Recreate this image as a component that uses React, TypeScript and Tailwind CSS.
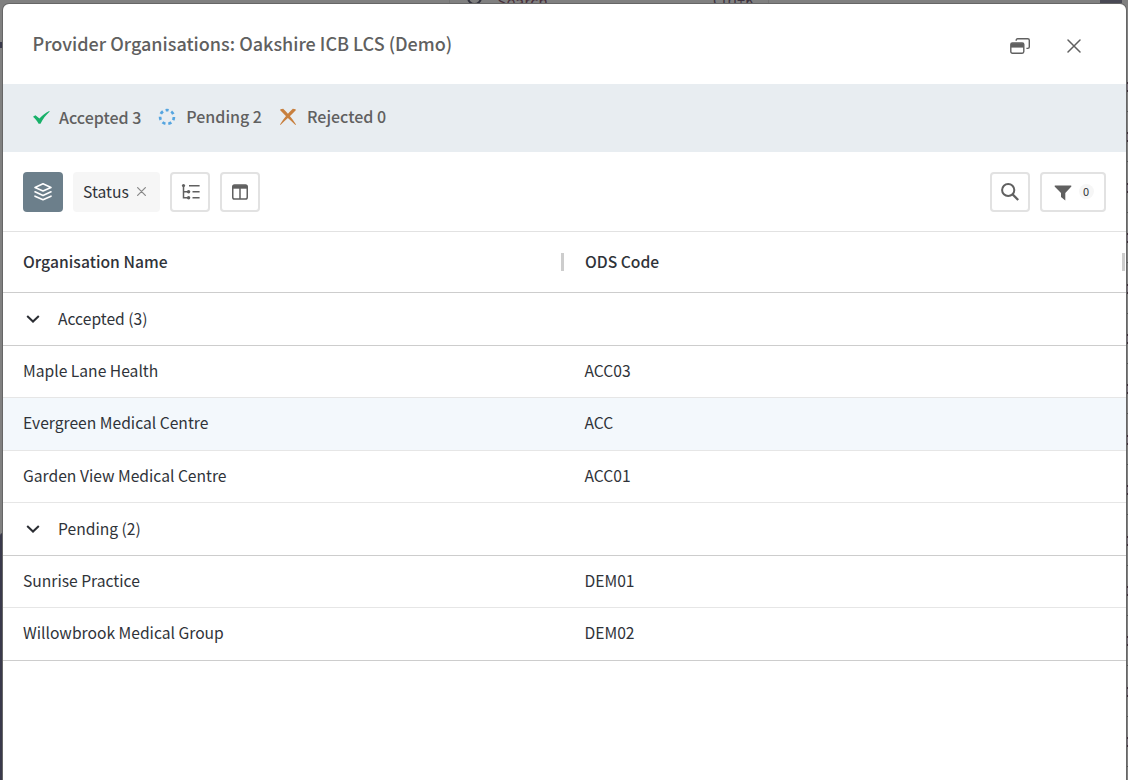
import clsx from "clsx";
import type { ReactNode } from "react";

interface Organisation {
  name: string;
  code: string;
  className: string;
}

interface Group {
  label: string;
  rows: Organisation[];
}

const groups: Group[] = [
  {
    label: "Accepted (3)",
    rows: [
      { name: "Maple Lane Health", code: "ACC03", className: "h-[52px] pb-0.5 border-[#e6e6e6]" },
      { name: "Evergreen Medical Centre", code: "ACC", className: "h-[53px] pb-0.5 border-[#e6e6e6] bg-[#f3f8fc]" },
      { name: "Garden View Medical Centre", code: "ACC01", className: "h-[52px] pb-0.5 border-[#e6e6e6]" },
    ],
  },
  {
    label: "Pending (2)",
    rows: [
      { name: "Sunrise Practice", code: "DEM01", className: "h-[52px] pb-0.5 border-[#e6e6e6]" },
      { name: "Willowbrook Medical Group", code: "DEM02", className: "h-[53px] pb-0.5 border-[#cdcdcd]" },
    ],
  },
];

function CheckIcon() {
  return (
    <svg width="17" height="13" viewBox="0 0 17 13" fill="#17b169">
      <path d="M0 5.8 2.4 4.2 6.4 7.4C9.4 4.4 12.6 1.6 16.2 0L16.7 .6C13 4 9.9 8 7.5 12.7H5.6C4.2 10 2.2 7.8 0 5.8Z" />
    </svg>
  );
}

function PendingIcon() {
  return (
    <svg width="18" height="18" viewBox="0 0 18 18" fill="none">
      <circle cx="9" cy="9" r="6.9" stroke="#55a5e0" strokeWidth="2.7" strokeDasharray="3.3 2.89" strokeDashoffset="1.65" transform="rotate(-90 9 9)" />
    </svg>
  );
}

function RejectIcon() {
  return (
    <svg width="18" height="18" viewBox="0 0 18 18" fill="#c8803f">
      <path d="M1.4 1.2 4.2 .8C7.8 4.4 13 10 17 16.4L16.4 17C11.2 11.8 6 7.4 1.2 2.2Z" />
      <path d="M16.6 1.2 13.8 .8C10 4.4 5 10 1 16.4L1.5 17C6.5 11.8 12 7.4 16.8 2.2Z" />
    </svg>
  );
}

function LayersIcon() {
  return (
    <svg width="20" height="20" viewBox="0 0 20 20" fill="none" stroke="#fff" strokeWidth="1.6" strokeLinejoin="round" strokeLinecap="round">
      <path d="M10 1.8 18 5.4 10 9 2 5.4Z" />
      <path d="M2 9.8 10 13.4 18 9.8" />
      <path d="M2 14.2 10 17.8 18 14.2" />
    </svg>
  );
}

function TreeIcon() {
  return (
    <svg width="20" height="18" viewBox="0 0 20 18" fill="none" stroke="#606060" strokeWidth="1.5" className="relative left-px">
      <path d="M2.5 2V14.7H7M2.5 8.7H7M8 2.7H18.6M11.5 8.7H18.6M11.5 14.7H18.6" />
      <g fill="#606060" stroke="none">
        <circle cx="2.5" cy="2.5" r="1.6" />
        <circle cx="7.6" cy="8.7" r="1.7" />
        <circle cx="7.6" cy="14.7" r="1.7" />
      </g>
    </svg>
  );
}

function ColumnsIcon() {
  return (
    <svg width="16" height="16" viewBox="0 0 16 16" fill="none" stroke="#606060" strokeWidth="1.5">
      <rect x=".75" y=".9" width="14.5" height="14.2" rx="1.8" />
      <path d="M8 3V15" />
      <path d="M1 2.9H15" strokeWidth="3.6" />
    </svg>
  );
}

function WindowsIcon() {
  return (
    <svg width="20" height="16" viewBox="0 0 20 16" fill="none" stroke="#606060" strokeWidth="1.4">
      <path d="M6.2 2.8V2.2Q6.2.8 7.6.8H17.8Q19.3.8 19.3 2.2V9Q19.3 10.4 17.8 10.4H16.4" />
      <rect x=".8" y="5" width="13" height="10.2" rx="1.6" />
      <path d="M1 7.4H13.7" strokeWidth="4.4" />
    </svg>
  );
}

function CloseIcon({ size, stroke = 1.5, color = "#606060" }: { size: number; stroke?: number; color?: string }) {
  return (
    <svg width={size} height={size} viewBox="0 0 14 14" fill="none" stroke={color} strokeWidth={stroke} strokeLinecap="round">
      <path d="M1 1 13 13M13 1 1 13" />
    </svg>
  );
}

function SearchIcon() {
  return (
    <svg width="20" height="20" viewBox="0 0 20 20" fill="none" stroke="#606060" strokeWidth="2">
      <circle cx="8.2" cy="8" r="6.1" />
      <path d="M12.6 12.4 18.2 18" strokeWidth="2.2" />
    </svg>
  );
}

function FunnelIcon() {
  return (
    <svg width="18" height="16" viewBox="0 0 18 16" fill="#606060" className="relative top-px left-px">
      <path d="M.8.5H17.2L17.4 1.5 11.3 8V15.4L7 12V8L.6 1.5Z" />
    </svg>
  );
}

function ChevronIcon() {
  return (
    <svg width="14" height="8" viewBox="0 0 14 8" fill="none" stroke="#2b2d33" strokeWidth="2">
      <path d="M1.2 1 7 6.5 12.8 1" />
    </svg>
  );
}

function StatusItem({ icon, className, children }: { icon: ReactNode; className: string; children: ReactNode }) {
  return (
    <div className={clsx("flex items-center", className)}>
      {icon}
      <span className="pb-px">{children}</span>
    </div>
  );
}

function ToolButton({ label, className, children }: { label: string; className?: string; children: ReactNode }) {
  return (
    <button
      type="button"
      aria-label={label}
      className={clsx("flex h-10 items-center justify-center rounded border-2 border-[#e2e2e2] bg-white", className ?? "w-10")}
    >
      {children}
    </button>
  );
}

// dimmed page behind the dialog, only slivers of it stay visible
function Backdrop() {
  return (
    <div className="absolute inset-0 bg-[#808080]" aria-hidden="true">
      <div className="absolute top-[533px] bottom-0 left-0 w-[3px] rounded-tl bg-[#3a3a4b]" />
      <div className="absolute top-[42px] left-0 h-1.5 w-[3px] bg-[#3a3a4b]" />
      <div className="absolute top-0 left-[449px] h-[3px] w-px bg-[#757575]" />
      <div className="absolute top-0 left-[768px] h-[3px] w-px bg-[#757575]" />
      <div className="absolute -top-[10px] left-[467px] h-[15px] w-[15px] rounded-full border-2 border-[#33333f]" />
      <div className="absolute -top-[7px] left-[497px] text-[16px] leading-4 text-[#49303b]">Search</div>
      <div className="absolute -top-[8px] left-[713px] text-[14.5px] leading-4 text-[#3d3340]">Ctrl+K</div>
      <div className="absolute top-0 left-[1100px] h-[3px] w-[22px] bg-[#494954]" />
      <div className="absolute top-[82px] right-0 flex w-px flex-col">
        {Array.from({ length: 14 }, (_, i) => (
          <div key={i} className="h-[50.4px]">
            <div className="h-2.5 border-y-2 border-[#3f303b] bg-[#77707a]" />
            <div className="mt-[19px] h-px bg-[#555]" />
          </div>
        ))}
      </div>
    </div>
  );
}

export default function App() {
  return (
    <div className="relative h-[780px] w-[1128px] overflow-hidden pt-1 pl-[3px] font-['Noto_Sans_CJK_SC',sans-serif] text-[15.65px] text-[#2f3339]">
      <Backdrop />
      <div className="relative h-full w-[1123px] rounded-t-md bg-white shadow-[0_0_0_1px_#666]">
        <header className="flex h-20 items-center justify-between pr-[45px] pl-[29.5px] text-[#606060]">
          <h1 className="pb-0.5 text-[18px] font-medium">Provider Organisations: Oakshire ICB LCS (Demo)</h1>
          <div className="flex items-center gap-[37px] pt-[3px]">
            <WindowsIcon />
            <CloseIcon size={14} />
          </div>
        </header>

        <div className="flex h-[68px] items-center gap-[17px] bg-[#e8edf1] pb-0.5 pl-[30px] text-[16px] font-medium text-[#606060]">
          <StatusItem icon={<CheckIcon />} className="gap-[9px] pt-px">Accepted 3</StatusItem>
          <StatusItem icon={<PendingIcon />} className="gap-[10px] pb-px">Pending 2</StatusItem>
          <StatusItem icon={<RejectIcon />} className="gap-[10px] pb-px">Rejected 0</StatusItem>
        </div>

        <div className="flex h-20 items-center justify-between border-b border-[#e2e2e2] px-5">
          <div className="flex gap-[10px]">
            <button type="button" aria-label="Group" className="flex h-10 w-10 items-center justify-center rounded bg-[#6c7f8b]">
              <LayersIcon />
            </button>
            <div className="flex h-10 w-[87px] items-center gap-2 rounded bg-[#f6f6f6] pl-[10px]">
              <span>Status</span>
              <CloseIcon size={9} stroke={1.9} color="#888" />
            </div>
            <ToolButton label="Tree">
              <TreeIcon />
            </ToolButton>
            <ToolButton label="Columns">
              <ColumnsIcon />
            </ToolButton>
          </div>
          <div className="flex gap-[10px]">
            <ToolButton label="Find">
              <SearchIcon />
            </ToolButton>
            <ToolButton label="Filter" className="w-[66px] gap-2">
              <FunnelIcon />
              <span className="flex h-[15px] w-[15px] items-center justify-center rounded-full bg-[#f6f6f6] text-[11px] leading-none">0</span>
            </ToolButton>
          </div>
        </div>

        <div className="flex h-[61px] items-center border-b border-[#cdcdcd] font-medium">
          <div className="flex w-[561px] items-center justify-between pl-5">
            <span className="pb-px tracking-[0.05px]">Organisation Name</span>
            <span className="h-[18px] w-[3px] bg-[#cdcdcd]" />
          </div>
          <div className="flex flex-1 items-center justify-between pr-px pl-[21px]">
            <span className="pb-px">ODS Code</span>
            <span className="h-[18px] w-[3px] bg-[#cdcdcd]" />
          </div>
        </div>

        {groups.map((group) => (
          <section key={group.label}>
            <div className="flex h-[53px] items-center gap-[18px] border-b border-[#cdcdcd] pl-[23px]">
              <ChevronIcon />
              <span className="pb-px">{group.label}</span>
            </div>
            {group.rows.map((row) => (
              <div key={row.code} className={clsx("flex items-center border-b", row.className)}>
                <span className="w-[561px] pl-5">{row.name}</span>
                <span className="pl-[20.5px]">{row.code}</span>
              </div>
            ))}
          </section>
        ))}
      </div>
    </div>
  );
}
